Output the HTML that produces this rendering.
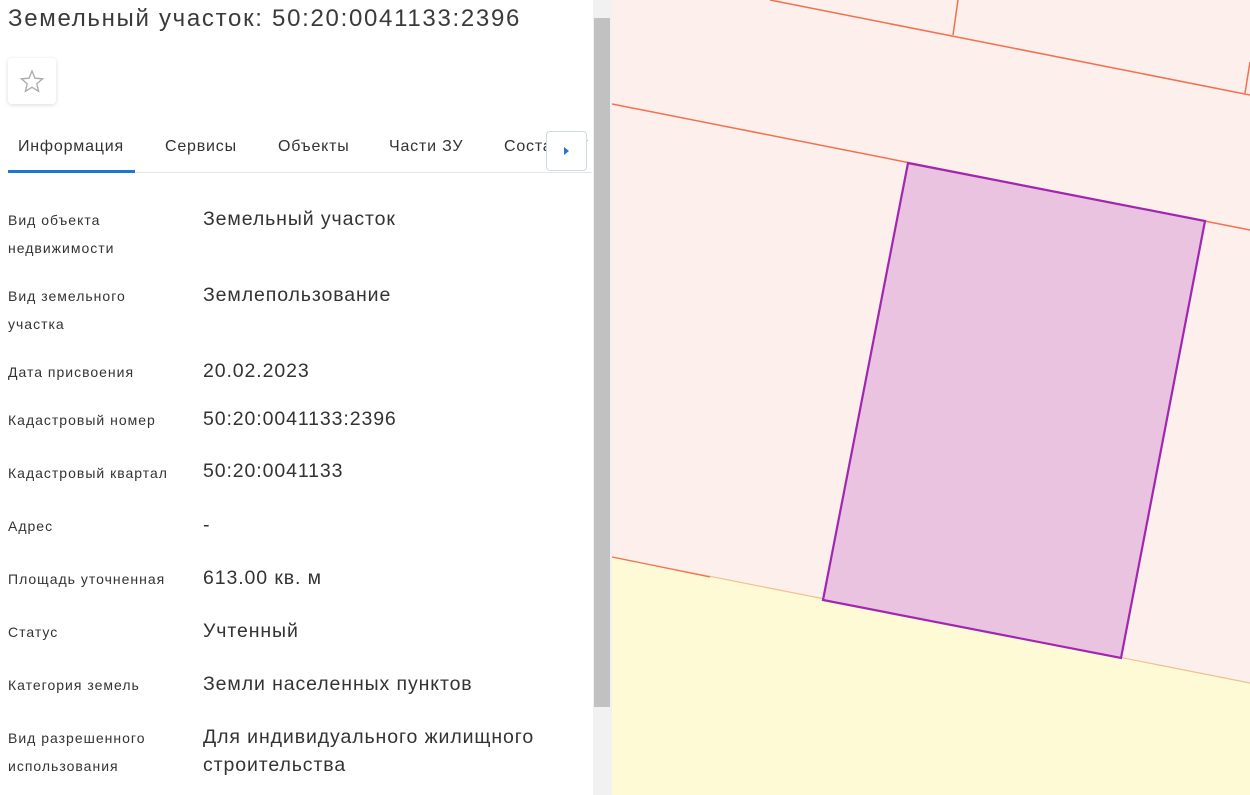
<!DOCTYPE html>
<html><head><meta charset="utf-8"><style>
body{margin:0;width:1250px;height:795px;overflow:hidden;background:#fff;font-family:"Liberation Sans","DejaVu Sans",sans-serif;position:relative}
.a{position:absolute;white-space:nowrap}
.l{font-size:14px;color:#333;line-height:28px;left:8px;letter-spacing:1px}
.v{font-size:19.5px;color:#333;line-height:28px;left:203px;letter-spacing:0.9px}
.t{font-size:16px;color:#333;top:138px;letter-spacing:0.8px}
</style></head><body>
<div class="a" style="left:8px;top:4px;font-size:24px;color:#3a3a3a;line-height:30px;letter-spacing:1.7px">Земельный участок: 50:20:0041133:2396</div>
<div class="a" style="left:8px;top:58px;width:48px;height:46px;border-radius:4px;box-shadow:0 1px 4px rgba(0,0,0,.15);background:#fff">
<svg width="48" height="46" viewBox="0 0 48 46"><path d="M24 13l3 7.2 7.6.6-5.8 5 1.8 7.5L24 29.3l-6.6 4 1.8-7.5-5.8-5 7.6-.6z" fill="none" stroke="#aaa" stroke-width="1.3"/></svg></div>
<div class="a t" style="left:18px">Информация</div>
<div class="a t" style="left:165px">Сервисы</div>
<div class="a t" style="left:278px">Объекты</div>
<div class="a t" style="left:389px">Части ЗУ</div>
<div class="a t" style="left:504px">Состав ЗУ</div>
<div class="a" style="left:8px;top:172px;width:584px;height:1px;background:#e6e6e6"></div>
<div class="a" style="left:8px;top:170px;width:127px;height:3px;background:#1e78d0"></div>
<div class="a" style="left:546px;top:131px;width:39px;height:38px;border:1px solid #cfd8e6;border-radius:4px;background:#fff"><svg width="39" height="38"><path d="M17 15l5 4-5 4z" fill="#1e78d0"/></svg></div>
<div class="a l" style="top:206px">Вид объекта<br>недвижимости</div><div class="a v" style="top:205px">Земельный участок</div>
<div class="a l" style="top:282px">Вид земельного<br>участка</div><div class="a v" style="top:281px">Землепользование</div>
<div class="a l" style="top:358px">Дата присвоения</div><div class="a v" style="top:357px">20.02.2023</div>
<div class="a l" style="top:406px">Кадастровый номер</div><div class="a v" style="top:405px">50:20:0041133:2396</div>
<div class="a l" style="top:459px">Кадастровый квартал</div><div class="a v" style="top:457px">50:20:0041133</div>
<div class="a l" style="top:512px">Адрес</div><div class="a v" style="top:511px">-</div>
<div class="a l" style="top:565px">Площадь уточненная</div><div class="a v" style="top:564px">613.00 кв. м</div>
<div class="a l" style="top:618px">Статус</div><div class="a v" style="top:617px">Учтенный</div>
<div class="a l" style="top:671px">Категория земель</div><div class="a v" style="top:670px">Земли населенных пунктов</div>
<div class="a l" style="top:724px">Вид разрешенного<br>использования</div><div class="a v" style="top:723px">Для индивидуального жилищного<br>строительства</div>
<div class="a" style="left:593px;top:0;width:19px;height:795px;background:#f1f1f1"></div>
<div class="a" style="left:594px;top:18px;width:16px;height:689px;background:#c1c1c1"></div>
<svg class="a" style="left:612px;top:0" width="638" height="795" viewBox="612 0 638 795">
<rect x="612" y="0" width="638" height="795" fill="#fdefeb"/>
<polygon points="612,557 1250,683 1250,795 612,795" fill="#fffad6"/>
<line x1="612" y1="557" x2="1250" y2="683" stroke="#f0c090" stroke-width="1.2"/>
<line x1="612" y1="557" x2="710" y2="577" stroke="#f07050" stroke-width="1.2"/>
<line x1="770" y1="0" x2="1250" y2="95" stroke="#f07050" stroke-width="1.5"/>
<line x1="958" y1="0" x2="953" y2="35" stroke="#f07050" stroke-width="1.5"/>
<line x1="1250" y1="62" x2="1245" y2="93" stroke="#f07050" stroke-width="1.5"/>
<line x1="612" y1="104" x2="1250" y2="230" stroke="#f07050" stroke-width="1.5"/>
<polygon points="908,163 1205,221 1121,658 823,600" fill="#e9c3df" stroke="#a126b0" stroke-width="2.2"/>
</svg>
</body></html>
